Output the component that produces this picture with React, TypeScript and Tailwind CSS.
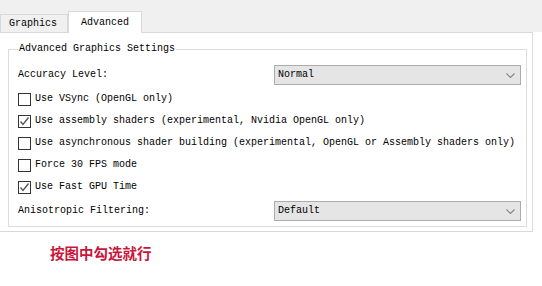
import React from 'react';

const mono = { fontFamily: '"Liberation Mono", "DejaVu Sans Mono", monospace' };

const Chevron = () => (
  <svg width="9" height="5" viewBox="0 0 9 5" className="mr-[5px]">
    <path d="M0.5 0.5 L4.5 4.5 L8.5 0.5" fill="none" stroke="#8a8a8a" strokeWidth="1.2" />
  </svg>
);

const Combo = ({ value }: { value: string }) => (
  <div className="w-[247px] h-[20px] bg-[#e5e5e5] border border-[#acacac] flex items-center justify-between pl-[3px]">
    <span className="text-[10px] text-black leading-none">{value}</span>
    <Chevron />
  </div>
);

const CheckRow = ({ label, checked }: { label: string; checked?: boolean }) => (
  <div className="h-[22px] flex items-center gap-[4px]">
    <div className="w-[13px] h-[13px] border border-[#333333] bg-white flex items-center justify-center">
      {checked && (
        <svg width="11" height="11" viewBox="0 0 11 11">
          <path d="M1.5 5.5 L4 8.5 L9.5 1.5" fill="none" stroke="#555555" strokeWidth="1.4" />
        </svg>
      )}
    </div>
    <span className="text-[10px] text-black leading-none">{label}</span>
  </div>
);

export default function App() {
  return (
    <div className="w-[542px] h-[286px] bg-white flex flex-col overflow-hidden" style={mono}>
      {/* Tab strip */}
      <div className="h-[32px] bg-[#f0f0f0] flex items-end shrink-0">
        <div className="w-[68px] h-[18px] bg-[#f0f0f0] border border-b-0 border-[#d9d9d9] flex items-center pl-[8px]">
          <span className="text-[10px] text-black leading-none">Graphics</span>
        </div>
        <div className="w-[74px] h-[22px] bg-white border border-b-0 border-[#d9d9d9] flex items-center justify-center -mb-px relative z-10">
          <span className="text-[10px] text-black leading-none">Advanced</span>
        </div>
      </div>

      {/* Tab page */}
      <div className="w-[533px] h-[200px] bg-white border border-l-0 border-[#d9d9d9] shrink-0 pt-[10px]">
        <fieldset className="ml-[8px] w-[519px] border border-[#dcdcdc] px-[9px] pt-[10px] pb-[5px]">
          <legend className="px-[1px] text-[10px] leading-[12px] text-black">Advanced Graphics Settings</legend>
          <div className="flex flex-col">
            <div className="flex items-center justify-between h-[20px] mb-[3px]">
              <span className="text-[10px] text-black leading-none">Accuracy Level:</span>
              <div className="-mr-[4px]">
                <Combo value="Normal" />
              </div>
            </div>
            <CheckRow label="Use VSync (OpenGL only)" />
            <CheckRow label="Use assembly shaders (experimental, Nvidia OpenGL only)" checked />
            <CheckRow label="Use asynchronous shader building (experimental, OpenGL or Assembly shaders only)" />
            <CheckRow label="Force 30 FPS mode" />
            <CheckRow label="Use Fast GPU Time" checked />
            <div className="flex items-center justify-between h-[20px] mt-[3px]">
              <span className="text-[10px] text-black leading-none">Anisotropic Filtering:</span>
              <div className="-mr-[4px]">
                <Combo value="Default" />
              </div>
            </div>
          </div>
        </fieldset>
      </div>

      {/* Note */}
      <div className="pl-[50px] pt-[11px]">
        <span
          className="text-[14.5px] font-bold text-[#c8163c] leading-none"
          style={{ fontFamily: '"Noto Sans CJK SC", sans-serif' }}
        >
          按图中勾选就行
        </span>
      </div>
    </div>
  );
}
